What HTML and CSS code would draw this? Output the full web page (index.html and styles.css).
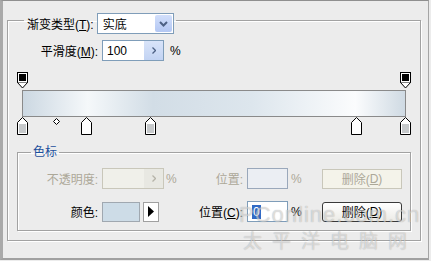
FILE: index.html
```html
<!DOCTYPE html>
<html lang="zh-CN">
  <head>
    <meta charset="UTF-8" />
    <meta name="viewport" content="width=device-width, initial-scale=1.0" />
    <title>渐变编辑器</title>
    <link rel="stylesheet" href="styles.css">
  </head>
  <body>
    <div class="frame">
      <fieldset class="group">
        <legend class="group-head">
          <div class="head-inner">
            <span>渐变类型(<u>T</u>):</span>
            <span class="select">
              <span class="select-text">实底</span>
              <span class="select-btn">
                <svg width="9" height="6" viewBox="0 0 9 6"><path d="M1 1 L4.5 4.5 L8 1" fill="none" stroke="#4d6185" stroke-width="2"/></svg>
              </span>
            </span>
          </div>
        </legend>

        <div class="row smooth">
          <span class="lbl lbl-wide">平滑度(<u>M</u>):</span>
          <span class="spin">
            <span class="spin-val">100</span>
            <span class="spin-btn">
              <svg width="4" height="7" viewBox="0 0 4 7"><path d="M0.5 0.5 L3.5 3.5 L0.5 6.5" fill="none" stroke="#4d6185" stroke-width="1.3"/></svg>
            </span>
          </span>
          <span class="unit-r">%</span>
        </div>

        <!-- 渐变条 + 色标 -->
        <div class="ramp">
          <svg class="stop stop-top" style="left:0px" width="11" height="17" viewBox="0 0 11 17"><rect x="0.5" y="0.5" width="10" height="10" fill="#fff" stroke="#000"/><rect x="2" y="2" width="7" height="7" fill="#000"/><path d="M0.5 10.5 L5.5 16 L10.5 10.5" fill="#fff" stroke="#000"/></svg>
          <svg class="stop stop-top" style="left:383px" width="11" height="17" viewBox="0 0 11 17"><rect x="0.5" y="0.5" width="10" height="10" fill="#fff" stroke="#000"/><rect x="2" y="2" width="7" height="7" fill="#000"/><path d="M0.5 10.5 L5.5 16 L10.5 10.5" fill="#fff" stroke="#000"/></svg>

          <div class="ramp-bar"></div>

          <svg class="stop stop-bottom" style="left:0px" width="11" height="18" viewBox="0 0 11 18"><path d="M5.5 0.5 L10.5 5.5 V17.5 H0.5 V5.5 Z" fill="#fff" stroke="#000"/><rect x="2" y="7" width="7" height="9" fill="#c6c9cb"/></svg>
          <svg class="mid" style="left:36px" width="7" height="7" viewBox="0 0 7 7"><path d="M3.5 0.5 L6.5 3.5 L3.5 6.5 L0.5 3.5 Z" fill="#fff" stroke="#000"/></svg>
          <svg class="stop stop-bottom" style="left:64px" width="11" height="18" viewBox="0 0 11 18"><path d="M5.5 0.5 L10.5 5.5 V17.5 H0.5 V5.5 Z" fill="#fff" stroke="#000"/></svg>
          <svg class="stop stop-bottom" style="left:128px" width="11" height="18" viewBox="0 0 11 18"><path d="M5.5 0.5 L10.5 5.5 V17.5 H0.5 V5.5 Z" fill="#fff" stroke="#000"/><rect x="2" y="7" width="7" height="9" fill="#c6c9cb"/></svg>
          <svg class="stop stop-bottom" style="left:334px" width="11" height="18" viewBox="0 0 11 18"><path d="M5.5 0.5 L10.5 5.5 V17.5 H0.5 V5.5 Z" fill="#fff" stroke="#000"/></svg>
          <svg class="stop stop-bottom" style="left:383px" width="11" height="18" viewBox="0 0 11 18"><path d="M5.5 0.5 L10.5 5.5 V17.5 H0.5 V5.5 Z" fill="#fff" stroke="#000"/><rect x="2" y="7" width="7" height="9" fill="#c6c9cb"/></svg>
        </div>

        <fieldset class="stops">
          <legend class="stops-head">色标</legend>

          <div class="row off">
            <span class="lbl">不透明度:</span>
            <span class="field">
              <span class="spin spin-off">
                <span class="spin-val"></span>
                <span class="spin-btn">
                  <svg width="4" height="7" viewBox="0 0 4 7"><path d="M0.5 0.5 L3.5 3.5 L0.5 6.5" fill="none" stroke="#b5b3a8" stroke-width="1.3"/></svg>
                </span>
              </span>
            </span>
            <span class="unit">%</span>
            <span class="pos-lbl">位置:</span>
            <span class="pos-in pos-off"></span>
            <span class="unit2">%</span>
            <span class="btn btn-off">删除(<u>D</u>)</span>
          </div>

          <div class="row color-row">
            <span class="lbl">颜色:</span>
            <span class="field">
              <span class="swatch"></span>
              <span class="swatch-btn">
                <svg width="6" height="11" viewBox="0 0 6 11"><path d="M0 0 L6 5.5 L0 11 Z" fill="#000"/></svg>
              </span>
            </span>
            <span class="unit"></span>
            <span class="pos-lbl">位置(<u>C</u>):</span>
            <span class="pos-in"><span class="sel">0</span></span>
            <span class="unit2">%</span>
            <span class="btn">删除(<u>D</u>)</span>
          </div>
        </fieldset>
      </fieldset>

      <div class="watermark">
        <div class="wm-1">PConline.com.cn</div>
        <div class="wm-2">太平洋电脑网</div>
      </div>
    </div>
  </body>
</html>
```

FILE: styles.css
```css
body {
  margin: 0;
  background: #ececec;
  font-family: "Liberation Sans", "Noto Sans CJK SC", sans-serif;
  font-size: 12px;
  color: #000;
}

u {
  text-decoration: underline;
}

.frame {
  position: relative;
  width: 429px;
  height: 260px;
  box-sizing: border-box;
  border-top: 1px solid #8f8f8f;
  border-left: 3px solid #a9a9a9;
  border-right: 1px solid #a5a5a5;
  border-bottom: 2px solid #a0a0a0;
  overflow: hidden;
}

/* group boxes */
.group {
  width: 414px;
  box-sizing: border-box;
  min-width: 0;
  margin: 6px 0 0 4px;
  padding: 0;
  border: 1px solid #a2a2a2;
  box-shadow: 1px 1px 0 #fff, inset 1px 1px 0 #fff;
}

.group-head {
  margin-left: 16px;
  padding: 6px 2px 0 3px;
}

.head-inner {
  display: flex;
  align-items: center;
  gap: 3px;
}

.select {
  display: flex;
  align-items: center;
  width: 77px;
  height: 21px;
  box-sizing: border-box;
  border: 1px solid #7f9db9;
  background: #fff;
}

.select-text {
  flex: 1;
  padding-left: 5px;
}

.select-btn {
  display: flex;
  align-items: center;
  justify-content: center;
  width: 17px;
  height: 17px;
  margin-right: 1px;
  border-radius: 2px;
  background: linear-gradient(#d2dffb, #b3c7f3);
}

.row {
  display: flex;
  align-items: center;
  height: 21px;
}

.smooth {
  margin-top: 6px;
}

.lbl {
  width: 80px;
  margin-right: 4px;
  text-align: right;
}

.lbl-wide {
  width: 90px;
}

.spin {
  display: flex;
  align-items: center;
  width: 62px;
  height: 21px;
  box-sizing: border-box;
  border: 1px solid #7f9db9;
  background: #fff;
}

.spin-val {
  flex: 1;
  padding-left: 4px;
}

.spin-btn {
  display: flex;
  align-items: center;
  justify-content: center;
  width: 19px;
  height: 19px;
  background: linear-gradient(#d9e4f9, #c2d3f3);
}

.unit-r {
  margin-left: 6px;
}

/* gradient ramp */
.ramp {
  position: relative;
  width: 394px;
  height: 64px;
  box-sizing: border-box;
  margin: 11px 0 0 9px;
  padding-top: 18px;
}

.ramp-bar {
  width: 384px;
  height: 27px;
  margin-left: 5px;
  box-sizing: border-box;
  border: 1px solid #8a8a8a;
  background: linear-gradient(
    90deg,
    #ccd8e2 0%,
    #f5f8fa 17%,
    #d2dde6 34%,
    #dde6ed 60%,
    #fbfcfd 87%,
    #cfdae3 100%
  );
}

.stop {
  position: absolute;
  display: block;
}

.stop-top {
  top: 0;
}

.stop-bottom {
  top: 45px;
}

.mid {
  position: absolute;
  top: 46px;
}

/* color stop box */
.stops {
  width: 394px;
  box-sizing: border-box;
  min-width: 0;
  margin: 9px 0 9px 9px;
  padding: 9px 0 8px;
  border: 1px solid #a2a2a2;
  box-shadow: 1px 1px 0 #fff, inset 1px 1px 0 #fff;
}

.stops-head {
  margin-left: 13px;
  padding: 0 2px;
  line-height: 14px;
  color: #1c4f9c;
}

.color-row {
  margin-top: 12px;
}

.field {
  display: flex;
  align-items: center;
  width: 62px;
}

.unit {
  width: 20px;
  margin-left: 2px;
}

.pos-lbl {
  width: 57px;
  margin-right: 4px;
  text-align: right;
}

.pos-in {
  display: flex;
  align-items: center;
  width: 41px;
  height: 21px;
  box-sizing: border-box;
  padding-left: 4px;
  border: 1px solid #7f9db9;
  background: #fff;
}

.sel {
  background: #316ac5;
  color: #fff;
  padding: 0 1px;
}

.unit2 {
  width: 31px;
  margin-left: 3px;
}

.btn {
  display: flex;
  align-items: center;
  justify-content: center;
  width: 80px;
  height: 20px;
  box-sizing: border-box;
  border: 1px solid #3a3a3a;
  border-radius: 3px;
  background: linear-gradient(#ffffff, #ecebe6);
}

.swatch {
  width: 38px;
  height: 20px;
  box-sizing: border-box;
  border: 1px solid #a0a8b0;
  background: #cddce7;
}

.swatch-btn {
  display: flex;
  align-items: center;
  justify-content: center;
  width: 16px;
  height: 20px;
  margin-left: 3px;
  box-sizing: border-box;
  border: 1px solid #a0a0a0;
  background: #fff;
}

/* disabled row */
.off {
  color: #aca899;
}

.spin-off {
  border-color: #c9c7ba;
  background: #f0f0ea;
}

.spin-off .spin-btn {
  background: #e8e8e2;
}

.pos-off {
  border-color: #9aa8bb;
  background: #ebeef3;
}

.btn-off {
  border-color: #c9c7ba;
  border-radius: 0;
  background: #f4f3ea;
}

/* watermark */
.watermark {
  position: absolute;
  left: 236px;
  top: 201px;
  white-space: nowrap;
  color: rgba(255, 255, 255, 0.5);
  text-shadow: 0 0 1px rgba(0, 0, 0, 0.3);
  pointer-events: none;
}

.wm-1 {
  font-size: 22px;
  line-height: 26px;
  letter-spacing: 1px;
}

.wm-2 {
  padding-left: 4px;
  font-family: "Noto Sans CJK SC", sans-serif;
  font-size: 19px;
  line-height: 24px;
  letter-spacing: 10px;
}
```
